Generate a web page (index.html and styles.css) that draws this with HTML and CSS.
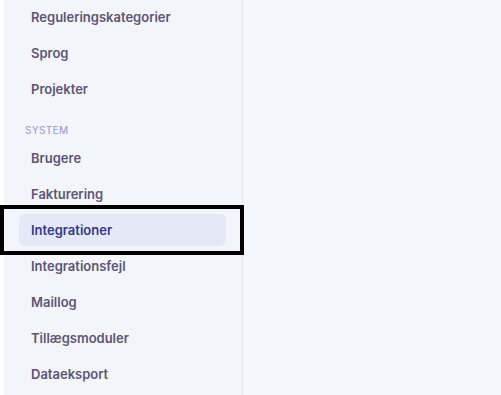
FILE: index.html
```html
<!DOCTYPE html>
<html lang="da">
<head>
    <meta charset="UTF-8">
    <meta name="viewport" content="width=device-width, initial-scale=1.0">
    <title>Indstillinger</title>
    <link rel="stylesheet" href="styles.css">
</head>
<body>
    <div class="layout">
        <nav class="sidebar">
            <a class="nav-item" href="#">Reguleringskategorier</a>
            <a class="nav-item" href="#">Sprog</a>
            <a class="nav-item" href="#">Projekter</a>

            <div class="nav-heading">System</div>
            <a class="nav-item" href="#">Brugere</a>
            <a class="nav-item" href="#">Fakturering</a>
            <div class="focus-wrap">
                <a class="nav-item active" href="#">Integrationer</a>
                <div class="focus-ring"></div>
            </div>
            <a class="nav-item" href="#">Integrationsfejl</a>
            <a class="nav-item" href="#">Maillog</a>
            <a class="nav-item" href="#">Tillægsmoduler</a>
            <a class="nav-item" href="#">Dataeksport</a>
        </nav>
        <main class="content"></main>
    </div>
</body>
</html>
```

FILE: styles.css
```css
body {
    margin: 0;
    font-family: Inter, "Noto Sans", sans-serif;
    background-color: #ffffff;
}

.layout {
    display: flex;
    height: 395px;
    padding-left: 4px;
    overflow: hidden;
}

.sidebar {
    box-sizing: border-box;
    width: 239px;
    flex-shrink: 0;
    display: flex;
    flex-direction: column;
    gap: 4px;
    padding: 1px 16px 0 15px;
    background-color: #f4f5fa;
    border-right: 1px solid #e4e6ee;
}

.nav-item {
    display: flex;
    align-items: center;
    flex-shrink: 0;
    height: 32px;
    padding-left: 12px;
    border-radius: 6px;
    font-size: 13px;
    font-weight: 600;
    color: #5b5676;
    text-decoration: none;
}

.nav-item.active {
    background-color: #e4e8f7;
    color: #353a86;
}

.nav-heading {
    flex-shrink: 0;
    margin: 14px 0 2px 6px;
    height: 13px;
    font-size: 10px;
    font-weight: 500;
    letter-spacing: 0.3px;
    text-transform: uppercase;
    color: #a3a7d2;
    display: flex;
    align-items: center;
}

.focus-wrap {
    position: relative;
    flex-shrink: 0;
}

.focus-ring {
    position: absolute;
    left: -19px;
    right: -18px;
    top: -9px;
    bottom: -9px;
    border: 4px solid #000000;
}

.content {
    flex: 1;
    background-color: #f5f6fb;
}
```
